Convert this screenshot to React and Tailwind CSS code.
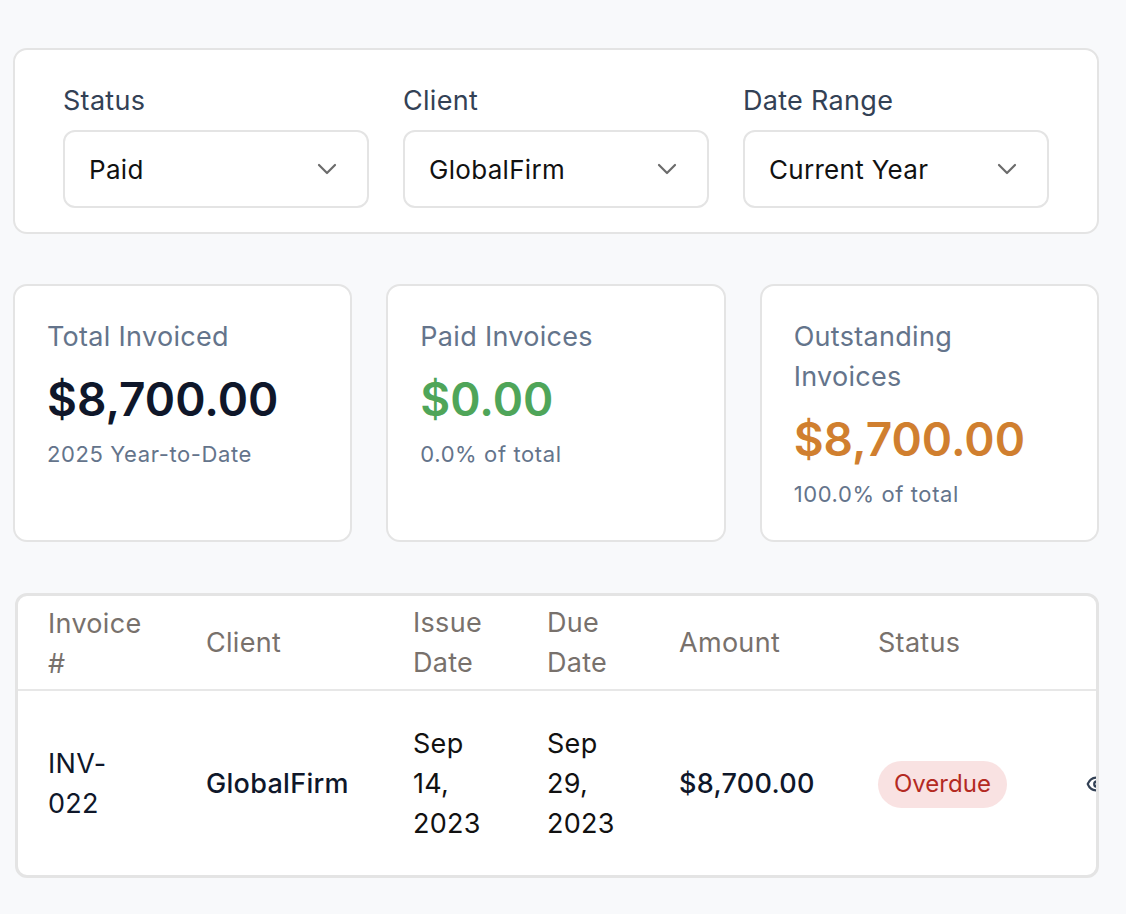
import { Eye } from "lucide-react";

const filters = [
  { label: "Status", value: "Paid" },
  { label: "Client", value: "GlobalFirm" },
  { label: "Date Range", value: "Current Year" },
];

const stats = [
  { title: "Total Invoiced", value: "$8,700.00", sub: "2025 Year-to-Date", color: "text-[#0f172a]" },
  { title: "Paid Invoices", value: "$0.00", sub: "0.0% of total", color: "text-[#4fa559]" },
  { title: "Outstanding Invoices", value: "$8,700.00", sub: "100.0% of total", color: "text-[#d07f2f]" },
];

function Chevron() {
  return (
    <svg width="20" height="12" viewBox="0 0 20 12" fill="none" className="shrink-0">
      <path d="M2 2l8 8 8-8" stroke="#6b6b6b" strokeWidth="2.2" strokeLinecap="round" strokeLinejoin="round" />
    </svg>
  );
}

export default function App() {
  return (
    <div className="min-h-screen bg-[#f8f9fb] pl-[13px] pr-[27px] pt-[48px] pb-10 font-['Inter','Liberation_Sans',sans-serif]">
      {/* filters */}
      <div className="rounded-[14px] border-2 border-[#e4e4e4] bg-white px-[48px] pt-[35px] pb-[24px]">
        <div className="grid grid-cols-3 gap-[34px]">
          {filters.map((f) => (
            <div key={f.label}>
              <p className="text-[27px] leading-[32px] tracking-[0.3px] text-[#334155] mb-[13px]">{f.label}</p>
              <div className="h-[78px] rounded-[12px] border-2 border-[#e4e4e4] bg-white flex items-center justify-between pl-[24px] pr-[30px]">
                <span className="text-[26px] tracking-[0.3px] text-[#111111]">{f.value}</span>
                <Chevron />
              </div>
            </div>
          ))}
        </div>
      </div>

      {/* stats */}
      <div className="grid grid-cols-3 gap-[34px] mt-[50px]">
        {stats.map((s) => (
          <div key={s.title} className="h-[258px] rounded-[14px] border-2 border-[#e4e4e4] bg-white px-[32px] pt-[31px]">
            <p className="text-[27px] leading-[40px] tracking-[0.3px] text-[#64748b]">{s.title}</p>
            <p className={`text-[46px] leading-[50px] font-semibold mt-[17px] ${s.color}`}>{s.value}</p>
            <p className="text-[22px] leading-[32px] text-[#64748b] mt-[14px] tracking-[0.6px]">{s.sub}</p>
          </div>
        ))}
      </div>

      {/* table */}
      <div className="mt-[51px] ml-[2px] rounded-[12px] border-[3px] border-[#e4e4e4] bg-white overflow-hidden">
        <table className="table-fixed border-collapse text-[27px] leading-[40px] tracking-[0.3px]" style={{ width: 1240 }}>
          <colgroup>
            <col className="w-[158px]" />
            <col className="w-[207px]" />
            <col className="w-[134px]" />
            <col className="w-[132px]" />
            <col className="w-[199px]" />
            <col className="w-[210px]" />
            <col className="w-[200px]" />
          </colgroup>
          <thead>
            <tr className="border-b-2 border-[#e7e7e7] text-[#78716c]">
              <th className="text-left font-normal pl-[30px] pr-[24px] pt-[8px] pb-[5px]">Invoice #</th>
              <th className="text-left font-normal pl-[30px] pr-[20px]">Client</th>
              <th className="text-left font-normal pl-[30px] pr-[20px]">Issue Date</th>
              <th className="text-left font-normal pl-[30px] pr-[20px]">Due Date</th>
              <th className="text-left font-normal pl-[30px] pr-[20px]">Amount</th>
              <th className="text-left font-normal pl-[30px] pr-[20px]">Status</th>
              <th className="pl-[30px] pr-[20px]"></th>
            </tr>
          </thead>
          <tbody className="text-[#0f172a]">
            <tr>
              <td className="pl-[30px] pr-[24px] pt-[33px] pb-[31px]">INV-022</td>
              <td className="pl-[30px] pr-[10px] pt-[33px] pb-[31px] font-medium">GlobalFirm</td>
              <td className="pl-[30px] pr-[16px] pt-[33px] pb-[31px] text-[#111111]">Sep 14, 2023</td>
              <td className="pl-[30px] pr-[16px] pt-[33px] pb-[31px] text-[#111111]">Sep 29, 2023</td>
              <td className="pl-[30px] pr-[20px] pt-[33px] pb-[31px] font-medium">$8,700.00</td>
              <td className="pl-[30px] pr-[20px] pt-[33px] pb-[31px]">
                <span className="inline-flex h-[47px] items-center rounded-full bg-[#f9e2e2] px-[16px] text-[24px] tracking-normal text-[#b42a22]">Overdue</span>
              </td>
              <td className="pl-[28px] pr-[20px] pt-[33px] pb-[31px]">
                <Eye size={22} className="text-[#334155]" strokeWidth={2.5} />
              </td>
            </tr>
          </tbody>
        </table>
      </div>
    </div>
  );
}
